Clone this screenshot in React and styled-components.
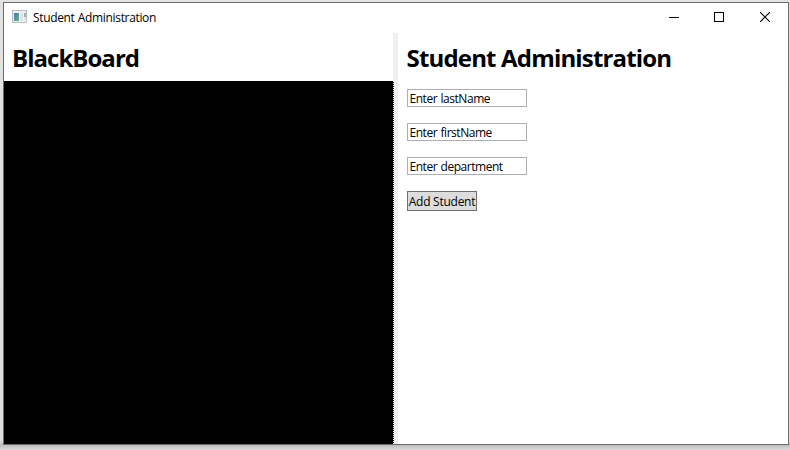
import React from "react";
import styled, { createGlobalStyle } from "styled-components";

const GlobalStyle = createGlobalStyle`
  *, *::before, *::after { box-sizing: border-box; }
  body { margin: 0; overflow: hidden; font-family: "Open Sans", "Noto Sans", sans-serif; font-size: 12px; color: #000; }
`;

const Desktop = styled.div`
  width: 790px;
  height: 450px;
  padding: 2px 1px 5px 3px;
  background: linear-gradient(#e2e2e2 0, #dedede 440px, #bcbcbc 445px, #dcdcdc 450px);
`;

const Window = styled.main`
  display: flex;
  flex-direction: column;
  width: 786px;
  height: 443px;
  border: 1px solid #6c6c6c;
  background: #fff;
`;

const TitleBar = styled.header`
  display: flex;
  align-items: flex-start;
  height: 30px;
  padding-left: 8px;
`;

const IconSlot = styled.span`
  display: flex;
  padding-top: 7px;
`;

const Title = styled.span`
  flex: 1;
  margin-left: 6px;
  line-height: 30px;
  letter-spacing: -0.34px;
  word-spacing: 0.5px;
  white-space: nowrap;
`;

const Controls = styled.div`
  display: flex;
`;

const ControlButton = styled.button`
  display: flex;
  align-items: center;
  justify-content: center;
  width: 46px;
  height: 28px;
  margin: 0;
  padding: 0;
  border: 0;
  background: none;
`;

const Panes = styled.div`
  display: flex;
  flex: 1;
  min-height: 0;
`;

const BoardPane = styled.section`
  width: 390px;
  flex: none;
  display: flex;
  flex-direction: column;
`;

const Heading = styled.h1`
  margin: 0;
  height: 48px;
  padding-left: ${(p) => p.$inset};
  font-size: 24px;
  line-height: 49px;
  font-weight: 700;
  letter-spacing: ${(p) => p.$tracking};
  white-space: nowrap;
`;

const BoardHeader = styled.div`
  display: flex;
  flex-direction: column;
  border-right: 1px solid #f0f0f0;
`;

const Board = styled.div`
  flex: 1;
  display: flex;
  background: #000;
  &::after {
    content: "";
    width: 1px;
    margin-left: auto;
    background: repeating-linear-gradient(#f0f0f0 0 1px, #000 1px 2px);
  }
`;

const Splitter = styled.div`
  width: 4px;
  flex: none;
  background: #f0f0f0;
`;

const FormPane = styled.section`
  flex: 1;
`;

const Form = styled.form`
  display: flex;
  flex-direction: column;
  align-items: flex-start;
  gap: 16px;
  padding: 8px 0 0 9px;
`;

const Field = styled.input`
  width: 120px;
  height: 18px;
  padding: 1px 2px 0 1.5px;
  border: 1px solid #abadb3;
  border-radius: 0;
  background: #fff;
  color: #000;
  font: inherit;
  letter-spacing: -0.46px;
  word-spacing: 0.7px;
`;

const AddButton = styled.button`
  width: 70px;
  height: 20px;
  padding: 1px 0 0;
  border: 1px solid #707070;
  border-radius: 0;
  background: #ddd;
  color: #000;
  font: inherit;
  line-height: 17px;
  letter-spacing: -0.26px;
  white-space: nowrap;
`;

function AppIcon() {
  return (
    <svg width="15" height="13" viewBox="0 0 15 13" shapeRendering="crispEdges">
      <defs>
        <linearGradient id="screen" x1="0" y1="0" x2="1" y2="1">
          <stop offset="0" stopColor="#4a79b0" />
          <stop offset="1" stopColor="#66b389" />
        </linearGradient>
      </defs>
      <rect width="15" height="13" fill="#b9bdc2" />
      <rect x="1" y="1" width="13" height="11" fill="#eef0f2" />
      <rect x="2" y="3" width="5" height="8" fill="url(#screen)" />
      <rect x="8" y="3" width="3" height="8" fill="#e2e4e6" />
      <rect x="12" y="3" width="2" height="4" fill="#8fb8b4" />
      <rect x="12" y="7" width="2" height="4" fill="#e3e8e8" />
    </svg>
  );
}

const fields = ["lastName", "firstName", "department"];

export default function App() {
  return (
    <Desktop>
      <GlobalStyle />
      <Window>
        <TitleBar>
          <IconSlot><AppIcon /></IconSlot>
          <Title>Student Administration</Title>
          <Controls>
            <ControlButton aria-label="Minimize">
              <svg width="12" height="10"><path d="M2 5.5H12" stroke="#000" /></svg>
            </ControlButton>
            <ControlButton aria-label="Maximize">
              <svg width="10" height="10"><rect x=".5" y=".5" width="9" height="9" fill="none" stroke="#000" /></svg>
            </ControlButton>
            <ControlButton aria-label="Close">
              <svg width="10" height="10"><path d="M0 0L10 10M10 0L0 10" stroke="#000" strokeWidth="1.1" /></svg>
            </ControlButton>
          </Controls>
        </TitleBar>
        <Panes>
          <BoardPane>
            <BoardHeader>
              <Heading $inset="8px" $tracking="-0.97px">BlackBoard</Heading>
            </BoardHeader>
            <Board />
          </BoardPane>
          <Splitter />
          <FormPane>
            <Heading $inset="8.5px" $tracking="-0.83px">Student Administration</Heading>
            <Form onSubmit={(e) => e.preventDefault()}>
              {fields.map((name) => (
                <Field key={name} defaultValue={`Enter ${name}`} />
              ))}
              <AddButton>Add Student</AddButton>
            </Form>
          </FormPane>
        </Panes>
      </Window>
    </Desktop>
  );
}
